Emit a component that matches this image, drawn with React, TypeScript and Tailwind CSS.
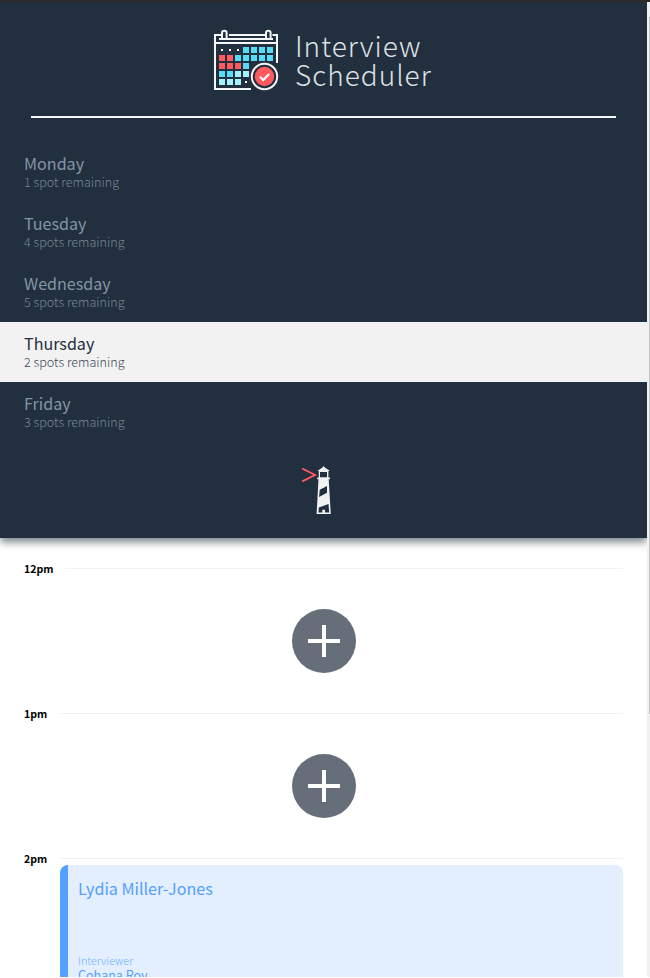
const days = [
  { name: "Monday", spots: "1 spot remaining" },
  { name: "Tuesday", spots: "4 spots remaining" },
  { name: "Wednesday", spots: "5 spots remaining" },
  { name: "Thursday", spots: "2 spots remaining", selected: true },
  { name: "Friday", spots: "3 spots remaining" },
];

const C = "#56dcf5";
const R = "#ff5a5f";
const L = "#a5f0fa";
const cells: [number, number, string][] = [
  [3, 0, C], [4, 0, C], [5, 0, C], [6, 0, C],
  [0, 1, R], [1, 1, R], [2, 1, C], [3, 1, C], [4, 1, C], [5, 1, C], [6, 1, C],
  [0, 2, R], [1, 2, R], [2, 2, R], [3, 2, C],
  [0, 3, C], [1, 3, C], [2, 3, L], [3, 3, L],
  [0, 4, L], [1, 4, L], [2, 4, L],
];

function CalendarLogo() {
  return (
    <svg width="67" height="62" viewBox="0 0 67 62" fill="none" className="block shrink-0">
      <path d="M8.500 6H2V60H38M16 6H52M59.500 6H64V34M6 10H60M2 14H64" stroke="#f5f6f7" strokeWidth="2" />
      <path d="M9 9.500V4a2.300 2.300 0 0 1 4.600 0V9.500M53 9.500V4a2.300 2.300 0 0 1 4.600 0V9.500" stroke="#f5f6f7" strokeWidth="2" />
      {cells.map(([x, y, color]) => (
        <rect key={`${x}-${y}`} x={6 + x * 8} y={18 + y * 8} width="6" height="6" fill={color} />
      ))}
      <path d="M8 20h2v2H8zM16 20h2v2h-2zM24 20h2v2h-2zM32 52h2v2h-2z" fill="#fff" />
      <circle cx="51.500" cy="47.500" r="12.700" fill="#222f3e" stroke="#f5f6f7" strokeWidth="2" />
      <circle cx="51.500" cy="47.500" r="9.700" fill={R} />
      <path d="M47 47.800l3.200 3.200 6-6" stroke="#fff" strokeWidth="2.200" />
    </svg>
  );
}

function Lighthouse() {
  return (
    <svg width="31" height="50" viewBox="0 0 31 50" className="block">
      <path d="M1.200 3.500L14 10L1.200 16.300" fill="none" stroke="#ff5a5f" strokeWidth="1.900" />
      <path d="M22.600 1l1.200 1.500 5.200 3.500H16.300l5.200-3.500z" fill="#f2f2f2" />
      <path d="M17.800 6H27.400V12.500H29V14.300H27.700L29.800 49H15.600L17.500 14.300H16.300V12.500H17.800z" fill="#f2f2f2" />
      <path d="M19 7h7v5.300h-7zM18.700 24.800L26 21V27.700L18.100 32zM17.800 42.500L27.500 39L28.200 47.500H24V44.800H21.300V47.500H17.500z" fill="#222f3e" />
    </svg>
  );
}

function Hour({ time }: { time: string }) {
  return (
    <header className="flex h-[14px] items-start justify-between">
      <h4 className="text-[10.600px] font-bold leading-[14px] text-black">{time}</h4>
      <hr className={`mt-[6px] h-px border-0 bg-[#f2f2f2] ${time === "12pm" ? "w-[558px]" : "w-[563px]"}`} />
    </header>
  );
}

function AddSlot({ time }: { time: string }) {
  return (
    <article className="h-[145px]">
      <Hour time={time} />
      <div className="flex justify-center pt-[33px]">
        <button className="grid size-16 place-items-center rounded-full bg-[#666e7a]" aria-label="Add">
          <svg width="32" height="32" viewBox="0 0 32 32" className="block">
            <path d="M14 0h4v14h14v4H18v14h-4V18H0v-4h14z" fill="#fff" />
          </svg>
        </button>
      </div>
    </article>
  );
}

export default function App() {
  return (
    <div className="h-[978px] w-[650px] overflow-hidden bg-white font-['Noto_Sans_CJK_SC','Noto_Sans_CJK_JP',sans-serif]">
      <div className="h-[2px] bg-[#2c2a2b]" />
      <div className="flex h-[975px] overflow-hidden">
        <main className="h-full w-[647px] overflow-hidden">
          <section className="h-[536px] bg-[#222f3e] shadow-[0_4px_8px_rgba(34,47,62,0.6)]">
            <div className="flex h-[114px] items-start pl-[213px] pt-[27px]">
              <CalendarLogo />
              <h1 className="ml-[15px] pt-[2px] text-[28px] font-light leading-[29px] tracking-[1px] text-[#dfe1e4]">
                Interview<br />Scheduler
              </h1>
            </div>
            <hr className="ml-[31px] h-[2px] w-[585px] border-0 bg-[#f5f6f7]" />
            <nav className="mt-6">
              {days.map((day) => (
                <div key={day.name} className={`h-[60px] pl-6 pt-[10px] ${day.selected ? "bg-[#f2f2f2] text-[#222f3e]" : "text-[#8395a7]"}`}>
                  <h2 className="text-[16.100px] leading-[22px]">{day.name}</h2>
                  <h3 className={`text-[12.600px] font-light leading-[16px] ${day.selected ? "text-[#3c4856]" : "text-[#768799]"}`}>{day.spots}</h3>
                </div>
              ))}
            </nav>
            <div className="pl-[301px] pt-[23px]"><Lighthouse /></div>
          </section>
          <section className="px-6 pt-6">
            <AddSlot time="12pm" />
            <AddSlot time="1pm" />
            <article>
              <Hour time="2pm" />
              <div className="-mt-px ml-9 h-[174px] w-[563px] overflow-hidden rounded-[8px] border-l-8 border-[#54a0ff] bg-[#e3efff] pl-[10px] pt-[11px] text-[#54a0ff]">
                <h2 className="text-[16.100px] leading-6">Lydia Miller-Jones</h2>
                <h4 className="mt-[53px] text-[10.800px] font-light leading-[14px] text-[#70afff]">Interviewer</h4>
                <h3 className="text-[12.500px] leading-[15px]">Cohana Roy</h3>
              </div>
            </article>
          </section>
        </main>
        <aside className="h-full w-[3px] bg-[#f1f1f1] pl-[2px] pt-[15px]">
          <div className="h-[697px] w-px bg-[#c1c1c1]" />
        </aside>
      </div>
    </div>
  );
}
